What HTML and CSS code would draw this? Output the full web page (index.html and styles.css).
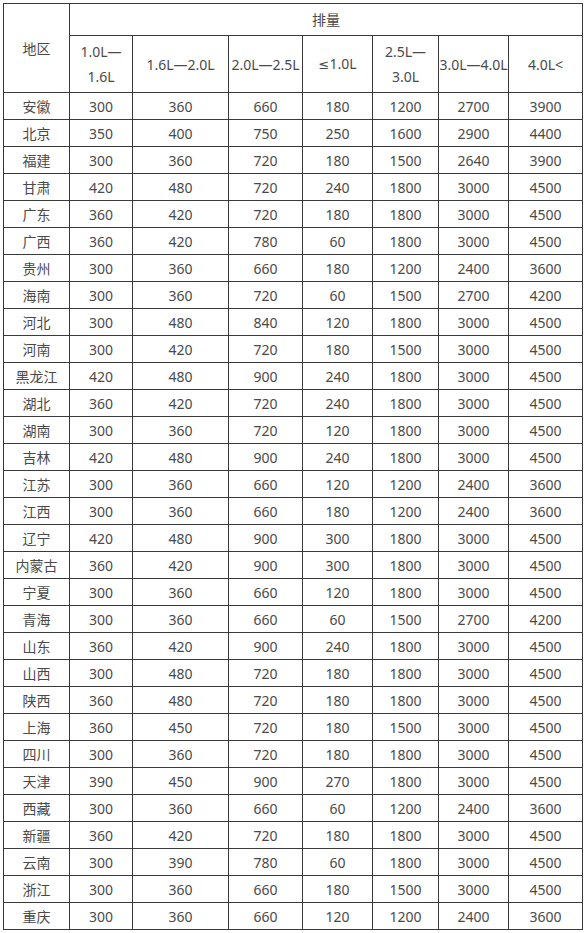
FILE: index.html
```html
<!DOCTYPE html>
<html lang="zh">
<head>
<meta charset="utf-8">
<title>排量</title>
<link rel="stylesheet" href="styles.css">
</head>
<body>
<table class="tbl">
<colgroup>
<col class="w1"><col class="w2"><col class="w3"><col class="w4"><col class="w5"><col class="w6"><col class="w7"><col class="w8">
</colgroup>
<thead>
<tr class="h1"><th rowspan="2">地区</th><th colspan="7">排量</th></tr>
<tr class="h2"><th>1.0L—<br>1.6L</th><th>1.6L—2.0L</th><th>2.0L—2.5L</th><th><span class="le">≤</span>1.0L</th><th>2.5L—<br>3.0L</th><th>3.0L—4.0L</th><th>4.0L&lt;</th></tr>
</thead>
<tbody>
<tr><td>安徽</td><td>300</td><td>360</td><td>660</td><td>180</td><td>1200</td><td>2700</td><td>3900</td></tr>
<tr><td>北京</td><td>350</td><td>400</td><td>750</td><td>250</td><td>1600</td><td>2900</td><td>4400</td></tr>
<tr><td>福建</td><td>300</td><td>360</td><td>720</td><td>180</td><td>1500</td><td>2640</td><td>3900</td></tr>
<tr><td>甘肃</td><td>420</td><td>480</td><td>720</td><td>240</td><td>1800</td><td>3000</td><td>4500</td></tr>
<tr><td>广东</td><td>360</td><td>420</td><td>720</td><td>180</td><td>1800</td><td>3000</td><td>4500</td></tr>
<tr><td>广西</td><td>360</td><td>420</td><td>780</td><td>60</td><td>1800</td><td>3000</td><td>4500</td></tr>
<tr><td>贵州</td><td>300</td><td>360</td><td>660</td><td>180</td><td>1200</td><td>2400</td><td>3600</td></tr>
<tr><td>海南</td><td>300</td><td>360</td><td>720</td><td>60</td><td>1500</td><td>2700</td><td>4200</td></tr>
<tr><td>河北</td><td>300</td><td>480</td><td>840</td><td>120</td><td>1800</td><td>3000</td><td>4500</td></tr>
<tr><td>河南</td><td>300</td><td>420</td><td>720</td><td>180</td><td>1500</td><td>3000</td><td>4500</td></tr>
<tr><td>黑龙江</td><td>420</td><td>480</td><td>900</td><td>240</td><td>1800</td><td>3000</td><td>4500</td></tr>
<tr><td>湖北</td><td>360</td><td>420</td><td>720</td><td>240</td><td>1800</td><td>3000</td><td>4500</td></tr>
<tr><td>湖南</td><td>300</td><td>360</td><td>720</td><td>120</td><td>1800</td><td>3000</td><td>4500</td></tr>
<tr><td>吉林</td><td>420</td><td>480</td><td>900</td><td>240</td><td>1800</td><td>3000</td><td>4500</td></tr>
<tr><td>江苏</td><td>300</td><td>360</td><td>660</td><td>120</td><td>1200</td><td>2400</td><td>3600</td></tr>
<tr><td>江西</td><td>300</td><td>360</td><td>660</td><td>180</td><td>1200</td><td>2400</td><td>3600</td></tr>
<tr><td>辽宁</td><td>420</td><td>480</td><td>900</td><td>300</td><td>1800</td><td>3000</td><td>4500</td></tr>
<tr><td>内蒙古</td><td>360</td><td>420</td><td>900</td><td>300</td><td>1800</td><td>3000</td><td>4500</td></tr>
<tr><td>宁夏</td><td>300</td><td>360</td><td>660</td><td>120</td><td>1800</td><td>3000</td><td>4500</td></tr>
<tr><td>青海</td><td>300</td><td>360</td><td>660</td><td>60</td><td>1500</td><td>2700</td><td>4200</td></tr>
<tr><td>山东</td><td>360</td><td>420</td><td>900</td><td>240</td><td>1800</td><td>3000</td><td>4500</td></tr>
<tr><td>山西</td><td>300</td><td>480</td><td>720</td><td>180</td><td>1800</td><td>3000</td><td>4500</td></tr>
<tr><td>陕西</td><td>360</td><td>480</td><td>720</td><td>180</td><td>1800</td><td>3000</td><td>4500</td></tr>
<tr><td>上海</td><td>360</td><td>450</td><td>720</td><td>180</td><td>1500</td><td>3000</td><td>4500</td></tr>
<tr><td>四川</td><td>300</td><td>360</td><td>720</td><td>180</td><td>1800</td><td>3000</td><td>4500</td></tr>
<tr><td>天津</td><td>390</td><td>450</td><td>900</td><td>270</td><td>1800</td><td>3000</td><td>4500</td></tr>
<tr><td>西藏</td><td>300</td><td>360</td><td>660</td><td>60</td><td>1200</td><td>2400</td><td>3600</td></tr>
<tr><td>新疆</td><td>360</td><td>420</td><td>720</td><td>180</td><td>1800</td><td>3000</td><td>4500</td></tr>
<tr><td>云南</td><td>300</td><td>390</td><td>780</td><td>60</td><td>1800</td><td>3000</td><td>4500</td></tr>
<tr><td>浙江</td><td>300</td><td>360</td><td>660</td><td>180</td><td>1500</td><td>3000</td><td>4500</td></tr>
<tr><td>重庆</td><td>300</td><td>360</td><td>660</td><td>120</td><td>1200</td><td>2400</td><td>3600</td></tr>
</tbody>
</table>
</body>
</html>
```
FILE: styles.css
```css
html, body {
  margin: 0;
  padding: 0;
  background: #fff;
}
body {
  padding: 3px 0 0 3px;
  font-family: "Noto Sans", "Noto Sans CJK SC", sans-serif;
  font-size: 14px;
  color: #4a4a4a;
}
.tbl {
  border-collapse: collapse;
  table-layout: fixed;
  width: 579px;
}
.w1 { width: 66px; }
.w2 { width: 63px; }
.w3 { width: 96px; }
.w4 { width: 74px; }
.w5 { width: 70px; }
.w6 { width: 66px; }
.w7 { width: 70px; }
.w8 { width: 74px; }
.tbl th, .tbl td {
  border: 1px solid #3a3a3a;
  padding: 0;
  text-align: center;
  vertical-align: middle;
  font-weight: normal;
  white-space: nowrap;
  overflow: hidden;
  line-height: 25px;
}
.le {
  font-family: "DejaVu Sans", "Liberation Sans", sans-serif;
  font-size: 13px;
}
.h1 th { height: 31px; }
.h2 th { height: 56px; }
.tbl td { height: 26px; }
```
